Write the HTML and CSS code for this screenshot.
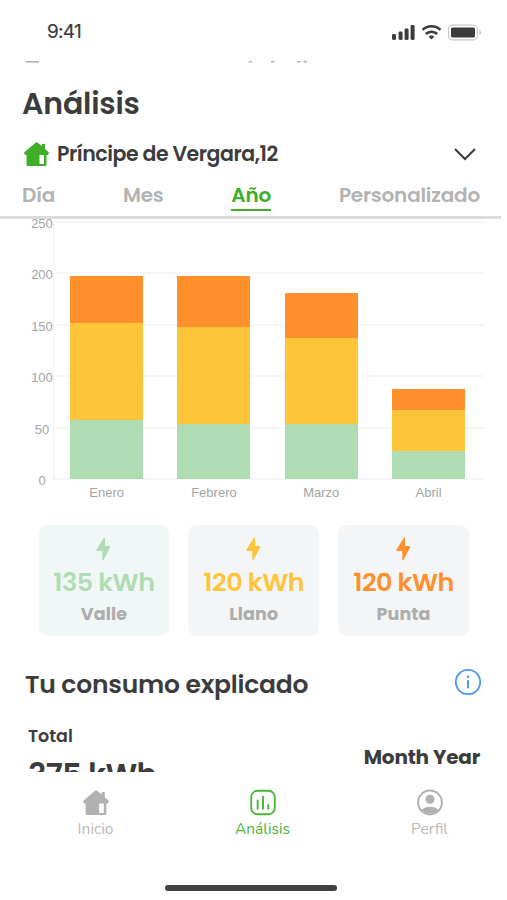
FILE: index.html
```html
<!DOCTYPE html>
<html lang="es">
<head>
  <meta charset="UTF-8" />
  <meta name="viewport" content="width=device-width, initial-scale=1.0"/>
  <title>Análisis</title>
  <link rel="stylesheet" href="styles.css">
</head>
<body>
  <div class="status-bar">
    <span class="time">9:41</span>
    <svg class="status-icons" width="92" height="20" viewBox="0 0 92 20">
      <g fill="#3c3c3c">
        <rect x="1" y="12" width="4" height="6" rx="1.4"/>
        <rect x="7.6" y="9.5" width="4" height="8.5" rx="1.4"/>
        <rect x="13.6" y="6.5" width="4" height="11.5" rx="1.4"/>
        <rect x="19.6" y="3" width="4" height="15" rx="1.4"/>
        <path d="M40.500 17.500l-2.800-2.800a4.200 4.200 0 0 1 5.600 0z"/>
        <rect x="60" y="5.6" width="24" height="10" rx="1.5"/>
      </g>
      <g fill="none" stroke="#3c3c3c" stroke-width="2.5">
        <path d="M31.500 7.800a13 13 0 0 1 18 0"/>
        <path d="M34.800 12a8.300 8.300 0 0 1 11.400 0"/>
      </g>
      <rect x="57.5" y="3.2" width="29" height="14.6" rx="4" fill="none" stroke="#c9c9c9" stroke-width="1.2"/>
      <path d="M88.2 8v5q2-1 2-2.500t-2-2.500z" fill="#c9c9c9"/>
    </svg>
  </div>

  <!-- scrolled content showing under the status bar -->
  <svg class="peek" width="507" height="4" viewBox="0 0 507 4">
    <g fill="#b0b0b0">
      <rect x="25.500" y="1" width="13.500" height="1.600"/>
      <rect x="248.500" y="1" width="3.500" height="1.400"/>
      <rect x="271" y="1" width="3.500" height="1.400"/>
      <rect x="297" y="1" width="3.500" height="1.400"/>
      <rect x="303.500" y="1" width="3.500" height="1.400"/>
    </g>
  </svg>

  <h1>Análisis</h1>

  <div class="address">
    <svg width="25" height="26" viewBox="0 0 25 26">
      <path fill="#3fae29" fill-rule="evenodd" d="M12.500 1L18 5V3h3v5l4 3.500-1 2.500h-1.500v9.500q0 1.500-1.500 1.500H4q-1.500 0-1.500-1.500V14H1L0 11.500zM15.500 14v9h4.500v-9z"/>
    </svg>
    <span class="address-name">Príncipe de Vergara,12</span>
    <svg class="chevron" width="22" height="13" viewBox="0 0 22 13">
      <path d="M1 1l10 10 10-10" fill="none" stroke="#3c3c3c" stroke-width="2"/>
    </svg>
  </div>

  <div class="tabs">
    <span class="tab">Día</span>
    <span class="tab">Mes</span>
    <span class="tab active">Año</span>
    <span class="tab">Personalizado</span>
  </div>

  <div class="chart">
    <div class="y-axis">
      <span>250</span><span>200</span><span>150</span><span>100</span><span>50</span><span>0</span>
    </div>
    <div class="chart-main">
      <div class="plot">
        <div class="grid-lines"><i></i><i></i><i></i><i></i><i></i><i></i></div>
        <div class="bars" id="bars"></div>
      </div>
      <div class="months" id="months"></div>
    </div>
  </div>

  <div class="cards">
    <div class="card valle">
      <svg width="15" height="24" viewBox="0 0 15 24"><path d="M8 .5Q9 0 9 1.500V9h4.500q1.200.3.500 1.500L7.500 23q-1.200 1-1.200-.500V14H1.200Q0 13.500.5 12.500z"/></svg>
      <span class="value">135 kWh</span>
      <span class="label">Valle</span>
    </div>
    <div class="card llano">
      <svg width="15" height="24" viewBox="0 0 15 24"><path d="M8 .5Q9 0 9 1.500V9h4.500q1.200.3.500 1.500L7.500 23q-1.200 1-1.200-.500V14H1.200Q0 13.500.5 12.500z"/></svg>
      <span class="value">120 kWh</span>
      <span class="label">Llano</span>
    </div>
    <div class="card punta">
      <svg width="15" height="24" viewBox="0 0 15 24"><path d="M8 .5Q9 0 9 1.500V9h4.500q1.200.3.500 1.500L7.500 23q-1.200 1-1.200-.500V14H1.200Q0 13.500.5 12.500z"/></svg>
      <span class="value">120 kWh</span>
      <span class="label">Punta</span>
    </div>
  </div>

  <div class="section-head">
    <h2>Tu consumo explicado</h2>
    <svg width="28" height="28" viewBox="0 0 28 28">
      <circle cx="14" cy="14" r="12.200" fill="none" stroke="#4b96ee" stroke-width="1.800"/>
      <circle cx="14" cy="8.800" r="1.200" fill="#4b96ee"/>
      <path d="M14 13v6.500" stroke="#4b96ee" stroke-width="2" stroke-linecap="round"/>
    </svg>
  </div>

  <div class="summary">
    <div>
      <div class="total-label">Total</div>
      <div class="total-value">375 kWh</div>
    </div>
    <div class="period">Month Year</div>
  </div>

  <div class="nav">
    <div class="nav-item">
      <svg width="26" height="26" viewBox="0 0 25 26">
        <path fill="#b1b1b1" fill-rule="evenodd" d="M12.500 1L18 5V3h3v5l4 3.500-1 2.500h-1.500v9.500q0 1.500-1.500 1.500H4q-1.500 0-1.500-1.500V14H1L0 11.500zM15.500 14v9h4.500v-9z"/>
      </svg>
      <span>Inicio</span>
    </div>
    <div class="nav-item current">
      <svg width="28" height="28" viewBox="0 0 28 28" fill="none" stroke="#4bb538" stroke-linecap="round">
        <rect x="1.800" y="1.800" width="24.400" height="24.400" rx="6.500" stroke-width="1.900"/>
        <path d="M8.500 12v8.500M14 8v12.500M19.500 16.500v4" stroke-width="2"/>
      </svg>
      <span>Análisis</span>
    </div>
    <div class="nav-item">
      <svg width="26" height="26" viewBox="0 0 26 26">
        <circle cx="13" cy="13" r="11.900" fill="none" stroke="#b1b1b1" stroke-width="2"/>
        <circle cx="13" cy="9.800" r="4.500" fill="#b1b1b1"/>
        <path d="M4.500 20.500q3.500-3.300 8.500-3.300t8.500 3.300A12 12 0 0 1 4.500 20.500z" fill="#b1b1b1"/>
      </svg>
      <span>Perfil</span>
    </div>
  </div>
  <div class="home-bar"></div>

  <script>
    const data = [
      { month: "Enero", valle: 57, llano: 94.5, punta: 45 },
      { month: "Febrero", valle: 53, llano: 94.5, punta: 49 },
      { month: "Marzo", valle: 53.5, llano: 83.5, punta: 43.5 },
      { month: "Abril", valle: 27, llano: 40, punta: 20 }
    ];
    const bars = document.getElementById("bars");
    const months = document.getElementById("months");

    data.forEach(d => {
      const bar = document.createElement("div");
      bar.className = "bar";
      ["punta", "llano", "valle"].forEach(key => {
        const part = document.createElement("div");
        part.className = "part " + key;
        part.style.height = (d[key] / 250 * 100) + "%";
        bar.appendChild(part);
      });
      bars.appendChild(bar);

      const label = document.createElement("span");
      label.textContent = d.month;
      months.appendChild(label);
    });
  </script>
</body>
</html>
```
FILE: styles.css
```css
* {
  box-sizing: border-box;
}

body {
  font-family: Poppins, Inter, sans-serif;
  background-color: #fefefe;
  color: #3c3c3c;
  margin: 0;
  width: 507px;
  height: 900px;
  overflow: hidden;
  display: flex;
  flex-direction: column;
}

svg {
  display: block;
  flex: none;
}

.status-bar {
  height: 60px;
  padding: 3px 24px 0 47px;
  display: flex;
  align-items: center;
  justify-content: space-between;
}

.time {
  font-family: Inter, sans-serif;
  font-size: 19px;
  font-weight: 400;
  letter-spacing: -0.7px;
  -webkit-text-stroke: 0.2px #3c3c3c;
}

h1 {
  margin: 0;
  height: 70px;
  padding-left: 22px;
  font-size: 30px;
  font-weight: 600;
  line-height: 79px;
  letter-spacing: -0.2px;
}

.address {
  height: 40px;
  padding: 0 31px 0 24px;
  display: flex;
  align-items: center;
}

.address-name {
  flex: 1;
  margin: -1px 0 0 8px;
  font-size: 20.5px;
  font-weight: 600;
  letter-spacing: -0.47px;
}

.tabs {
  width: 501px;
  height: 45px;
  padding: 5px 21px 0 22px;
  border-bottom: 3px solid #dcdcdc;
  display: flex;
  justify-content: space-between;
  align-items: flex-start;
}

.tab {
  height: 32px;
  line-height: 32px;
  font-size: 20px;
  font-weight: 600;
  letter-spacing: -0.2px;
  color: #b3b3b3;
}

.tab.active {
  color: #3fae29;
  border-bottom: 2px solid #3fae29;
}

.chart {
  height: 287px;
  display: flex;
}

.y-axis {
  width: 53px;
  height: 272px;
  margin-top: -3px;
  padding-left: 31px;
  display: flex;
  flex-direction: column;
  justify-content: space-between;
  text-align: center;
  font-family: "Liberation Sans", sans-serif;
  font-size: 13px;
  line-height: 15px;
  color: #a5a5a5;
}

.chart-main {
  width: 431px;
}

.plot {
  display: grid;
  height: 259px;
  margin-top: 2px;
  border-left: 1px solid #f3f3f3;
}

.grid-lines,
.bars {
  grid-area: 1 / 1;
}

.grid-lines {
  display: flex;
  flex-direction: column;
  justify-content: space-between;
}

.grid-lines i {
  height: 2px;
  background-color: #f6f6f6;
}

.bars,
.months {
  display: grid;
  grid-template-columns: repeat(4, 107.3px);
  justify-items: center;
}

.bars {
  margin-left: -1px;
}

.bar {
  width: 73px;
  height: 258px;
  display: flex;
  flex-direction: column;
  justify-content: flex-end;
}

.part.valle {
  background-color: #b0dcb4;
}

.part.llano {
  background-color: #ffc53a;
}

.part.punta {
  background-color: #ff902b;
}

.months {
  padding-top: 5px;
  font-family: "Liberation Sans", sans-serif;
  font-size: 13px;
  line-height: 16px;
  color: #a5a5a5;
}

.cards {
  display: flex;
  gap: 19px;
  margin: 19px 38px 0 38.5px;
}

.card {
  width: 131px;
  height: 111px;
  padding-top: 12px;
  border-radius: 9px;
  background-color: #f3f5f6;
  display: flex;
  flex-direction: column;
  align-items: center;
}

.card.valle {
  background-color: #f1f7f7;
}

.value {
  margin-top: 5px;
  font-size: 25.5px;
  font-weight: 600;
  line-height: 32px;
  letter-spacing: -0.5px;
}

.label {
  margin-top: 4px;
  font-size: 17.5px;
  font-weight: 700;
  line-height: 24px;
  letter-spacing: 0.1px;
  color: #adadad;
}

.card.valle svg { fill: #b0dcb4; }
.card.llano svg { fill: #ffc53a; }
.card.punta svg { fill: #ff902b; }
.card.valle .value { color: #b0dcb4; }
.card.llano .value { color: #ffc53a; }
.card.punta .value { color: #ff902b; }

.section-head {
  height: 65px;
  padding: 32px 25px 0 25px;
  display: flex;
  justify-content: space-between;
}

h2 {
  margin: 0;
  font-size: 25px;
  font-weight: 600;
  line-height: 34px;
  letter-spacing: -0.2px;
}

.summary {
  height: 71px;
  padding: 23px 27px 0 28px;
  overflow: hidden;
  display: flex;
  justify-content: space-between;
}

.total-label {
  font-size: 17.5px;
  font-weight: 600;
  line-height: 24px;
}

.total-value {
  font-size: 31px;
  font-weight: 600;
  line-height: 36px;
  margin-top: 9px;
  letter-spacing: -0.7px;
}

.period {
  padding-top: 19px;
  font-size: 20px;
  font-weight: 700;
  line-height: 28px;
  letter-spacing: -0.2px;
}

.nav {
  height: 113px;
  padding: 17px 12px 0;
  display: grid;
  grid-template-columns: repeat(3, 167px);
}

.nav-item {
  display: flex;
  flex-direction: column;
  align-items: center;
  font-family: Nunito, Lato, sans-serif;
  font-size: 15.5px;
  line-height: 20px;
  color: #bababa;
}

.nav-item svg {
  height: 27px;
}

.nav-item span {
  margin-top: 3px;
}

.nav-item.current {
  color: #4bb538;
}

.home-bar {
  width: 172px;
  height: 6px;
  margin-left: 165px;
  border-radius: 3px;
  background-color: #404040;
}
```
